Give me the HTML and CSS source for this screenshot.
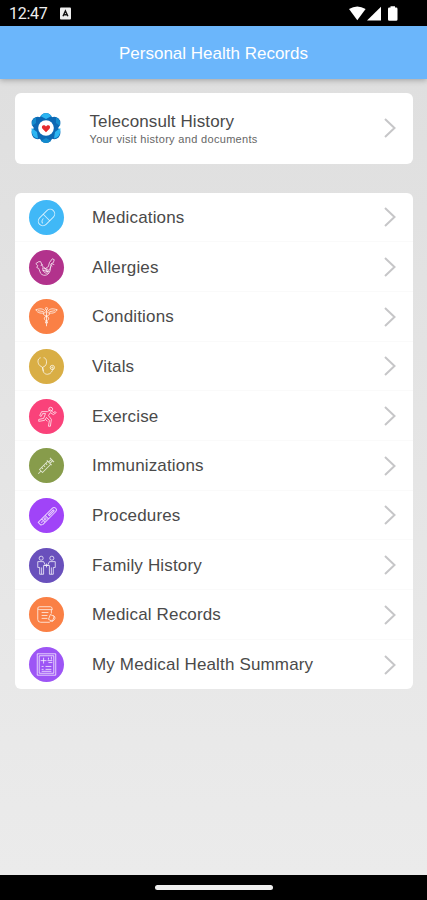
FILE: index.html
```html
<!DOCTYPE html>
<html lang="en">
<head>
<meta charset="utf-8">
<title>Personal Health Records</title>
<link rel="stylesheet" href="styles.css">
</head>
<body>
<div class="status">
  <span class="time">12:47</span>
  <svg class="badge" width="11" height="13" viewBox="0 0 11 13"><rect y=".5" width="11" height="12" rx="1" fill="#eee"/><path d="M3 9.200 5.400 4l2.500 5.200M4 7.700h3" fill="none" stroke="#111" stroke-width="1.400"/></svg>
  <svg class="signals" width="50" height="16" viewBox="0 0 50 16" fill="#fff"><path d="M0 3Q8.300-2 16.600 3L8.300 14.200Z"/><path d="M18 14.500 32 .7V14.500Z"/><path d="M41.500.200h4.500v1.400h1.200q1.300 0 1.300 1.300v10.600q0 1.300-1.300 1.300h-6.900q-1.300 0-1.300-1.300V2.900q0-1.300 1.300-1.300h1.200Z"/></svg>
</div>
<header class="header"><h1>Personal Health Records</h1></header>
<main class="content">
  <section class="card consult">
    <svg class="logo" width="30" height="32" viewBox="-15 -16 30 32">
      <path d="M0-12 11-9 11 9 0 12-11 9-11-9Z" fill="#0963ae"/>
      <g fill="#0b68b4"><circle cy="-8.500" r="6.500"/><circle cx="8.200" cy="-5" r="6.200"/><circle cx="8.200" cy="5" r="6.200"/><circle cy="8.500" r="6.500"/><circle cx="-8.200" cy="5" r="6.200"/><circle cx="-8.200" cy="-5" r="6.200"/></g>
      <path d="M-5.500-12Q0-18 5.500-12L0-9ZM9 4l5.300-4q1 9-6.300 10.500ZM-9 4l-5.300-4q-1 9 6.300 10.500Z" fill="#2cb5f2"/>
      <path d="M10-10.500q5 2 4 8.500l-4-3ZM-10-10.500q-5 2-4 8.500l4-3ZM-5 13q5 4 10 0L0 10Z" fill="#138bcd"/>
      <circle r="7.800" fill="#fff"/><path d="M0 4.200-3.500.7C-5.500-2-1.800-4.200 0-1.500 1.800-4.200 5.500-2 3.500.7Z" fill="#e52b2d"/>
    </svg>
    <div class="consult-text"><h2>Teleconsult History</h2><p>Your visit history and documents</p></div>
    <svg class="chevron" width="12" height="20" viewBox="0 0 12 20"><path d="m1 1 9.500 9L1 19"/></svg>
  </section>
  <ul class="card list">
    <li><svg class="icon blue" viewBox="-18 -18 36 36"><g transform="rotate(-45)"><rect x="-10" y="-4.700" width="20" height="9.400" rx="4.700"/><path d="M0-4.700V4.700M-7 1.500q.3-3 4-3"/></g></svg><span>Medications</span><svg class="chevron" width="12" height="20" viewBox="0 0 12 20"><path d="m1 1 9.500 9L1 19"/></svg></li>
    <li><svg class="icon magenta" viewBox="-18 -18 36 36"><path d="m-8-6 2 0 2 5 3 2 3-2 1-4 3-4 2 1-1 3-2 1-1 5c0 7-7 9-10 5l-2-5-2-1 1-2-2-2ZM-4 0c0 4 2 6 5 6M4-1c0 3-2 6-5 5M-6-2l2-1M5-4l3 1M-1 1l3 5M4-3l2 2M-4 3l7 1M-3 1l5 1"/></svg><span>Allergies</span><svg class="chevron" width="12" height="20" viewBox="0 0 12 20"><path d="m1 1 9.500 9L1 19"/></svg></li>
    <li><svg class="icon orange" viewBox="-18 -18 36 36"><circle cy="-8" r="1.200"/><path d="M0-7V10M-1-5C-4-9-7-8-11-7-9-3-5-3-1-4M1-5C4-9 7-8 11-7 9-3 5-3 1-4M-3-4C-5 0 4-1 2 3 1 5-2 4-1 7M3-4C5 0-4-1-2 3-1 5 2 4 1 7M-9-6l6 1M9-6 3-5"/></svg><span>Conditions</span><svg class="chevron" width="12" height="20" viewBox="0 0 12 20"><path d="m1 1 9.500 9L1 19"/></svg></li>
    <li><svg class="icon gold" viewBox="-18 -18 36 36"><path d="M-6-9c-4 1-3 6-1 8l3 2 3-2c2-3 1-8-2-8M-4 1c0 5 2 7 5 7 4 0 5-4 6-6M-4 1l1 4"/><circle cx="6" cy="1" r="2.200"/><circle cx="6" cy="1" r=".6"/></svg><span>Vitals</span><svg class="chevron" width="12" height="20" viewBox="0 0 12 20"><path d="m1 1 9.500 9L1 19"/></svg></li>
    <li><svg class="icon pink" viewBox="-18 -18 36 36"><circle cx="4.300" cy="-7.500" r="2"/><path d="m1-5-6 0-2 4 1.500 1L-4-3h3l-2 5-5 1v2l6-1 2-3 3 3-1 6h2l1-7-3-4 2-3 3 2 3-2-1-1-2 1-3-3ZM-1 3l2 2"/></svg><span>Exercise</span><svg class="chevron" width="12" height="20" viewBox="0 0 12 20"><path d="m1 1 9.500 9L1 19"/></svg></li>
    <li><svg class="icon green" viewBox="-18 -18 36 36"><g transform="rotate(-45)"><path d="M-12 0h4M-8-2.200h12v4.400H-8ZM4-3.500v7M4-1h4v2H4M8-3v6M-5-2v2M-2-2v2M1-2v2"/></g></svg><span>Immunizations</span><svg class="chevron" width="12" height="20" viewBox="0 0 12 20"><path d="m1 1 9.500 9L1 19"/></svg></li>
    <li><svg class="icon purple" viewBox="-18 -18 36 36"><g transform="translate(1 1) rotate(-45)"><path d="M-11-2.500 9-2.500q3 0 3 2.500T9 2.500H-9l-2-1ZM-6-2.500v5M-1-2.500v5M2-.700h7v1.500H2ZM-9 0h2"/><circle cx="-3.500" r="1"/></g></svg><span>Procedures</span><svg class="chevron" width="12" height="20" viewBox="0 0 12 20"><path d="m1 1 9.500 9L1 19"/></svg></li>
    <li><svg class="icon indigo" viewBox="-18 -18 36 36"><circle cx="-5.500" cy="-7.500" r="2.100"/><circle cx="5.500" cy="-7.500" r="2.100"/><path d="M-9-4h6l2 4h-2v9h-4V2h-2ZM9-4H3L1 0h2v9h4V2h2ZM-2 0h4M-5 2v7M5 2v7M0-2v4"/></svg><span>Family History</span><svg class="chevron" width="12" height="20" viewBox="0 0 12 20"><path d="m1 1 9.500 9L1 19"/></svg></li>
    <li><svg class="icon orange" viewBox="-18 -18 36 36"><path d="M-7-8H4q2 0 2 3H-7q-2 0-2-1.500T-7-8M-9-6V5q0 3 3 3H3l2-2M5-5v4M-5-2h7M-5 1h6M-5 4h6"/><path d="M4 0 8 2 6 7 2 5ZM7 1c4 3 0 6-2 6"/></svg><span>Medical Records</span><svg class="chevron" width="12" height="20" viewBox="0 0 12 20"><path d="m1 1 9.500 9L1 19"/></svg></li>
    <li><svg class="icon violet" viewBox="-18 -18 36 36"><path d="M-9.500-11h19v22h-19ZM-7.500-9h15V9h-15ZM-3-7v6M-6-4h6M2-7v2M5-8v3M1-4h5M2-2h4M-5 2h2M-1 2h6M-5 5h2M-1 5h6M-5 7h10"/></svg><span>My Medical Health Summary</span><svg class="chevron" width="12" height="20" viewBox="0 0 12 20"><path d="m1 1 9.500 9L1 19"/></svg></li>
  </ul>
</main>
<footer class="navbar"><div class="handle"></div></footer>
</body>
</html>
```
FILE: styles.css
```css
* { box-sizing: border-box; }
body {
  margin: 0;
  width: 427px;
  height: 900px;
  display: flex;
  flex-direction: column;
  overflow: hidden;
  background: #000;
  font-family: "Liberation Sans", Arial, sans-serif;
  color: #4a4a4a;
}
h1, h2, p, ul { margin: 0; padding: 0; font-weight: 400; }
.status {
  height: 26px;
  flex: none;
  display: flex;
  align-items: center;
  padding: 2px 28px 0 9px;
  color: #eee;
}
.time { width: 51px; font: 400 16px/24px Roboto, sans-serif; letter-spacing: -0.25px; }
.badge { margin-bottom: 1px; }
.signals { margin-left: auto; }
.header {
  height: 53px;
  flex: none;
  display: flex;
  align-items: center;
  justify-content: center;
  padding-top: 2px;
  background: #6bb6fb;
  color: #fff;
  box-shadow: 0 1px 6px rgba(0, 0, 0, 0.3);
  z-index: 1;
}
.header h1 { font-size: 17px; line-height: 20px; }
.content {
  flex: 1;
  padding: 14px 14px 0 15px;
  background: linear-gradient(#dfdfdf, #ebebeb);
}
.card { background: #fff; border-radius: 6px; }
.consult {
  height: 71px;
  display: flex;
  align-items: center;
  padding: 0 17px 1px 16px;
}
.logo { flex: none; }
.consult-text { margin: 1px 0 0 28.500px; flex: 1; }
.consult h2 { font-size: 17px; line-height: 20px; letter-spacing: 0.1px; }
.consult p { font-size: 11px; line-height: 14px; letter-spacing: 0.32px; color: #666; }
.chevron { flex: none; fill: none; stroke: #c6c6c8; stroke-width: 2; }
.list { margin-top: 28.500px; list-style: none; }
.list li {
  height: 49.700px;
  display: flex;
  align-items: center;
  padding: 1px 17px 0 14px;
  border-bottom: 1px solid #fafafa;
}
.list li:last-child { border-color: transparent; }
.list span { flex: 1; margin-left: 28px; padding-top: 1px; font-size: 17px; line-height: 20px; letter-spacing: 0.16px; }
.icon {
  width: 35px;
  height: 35px;
  flex: none;
  border-radius: 50%;
  fill: none;
  stroke: rgba(255, 255, 255, 0.75);
  stroke-width: 1;
  stroke-linejoin: round;
}
.blue { background: #40b8f7; }
.magenta { background: #b2328c; }
.orange { background: #fa8045; }
.gold { background: #d9ae45; }
.pink { background: #fa427a; }
.green { background: #879c4b; }
.purple { background: #a044f8; }
.indigo { background: #6950bc; }
.violet { background: #9d55f5; }
.navbar {
  height: 25px;
  flex: none;
  display: flex;
  justify-content: center;
  background: #000;
}
.handle { width: 118px; height: 5px; margin-top: 10px; border-radius: 3px; background: #eee; }
```
